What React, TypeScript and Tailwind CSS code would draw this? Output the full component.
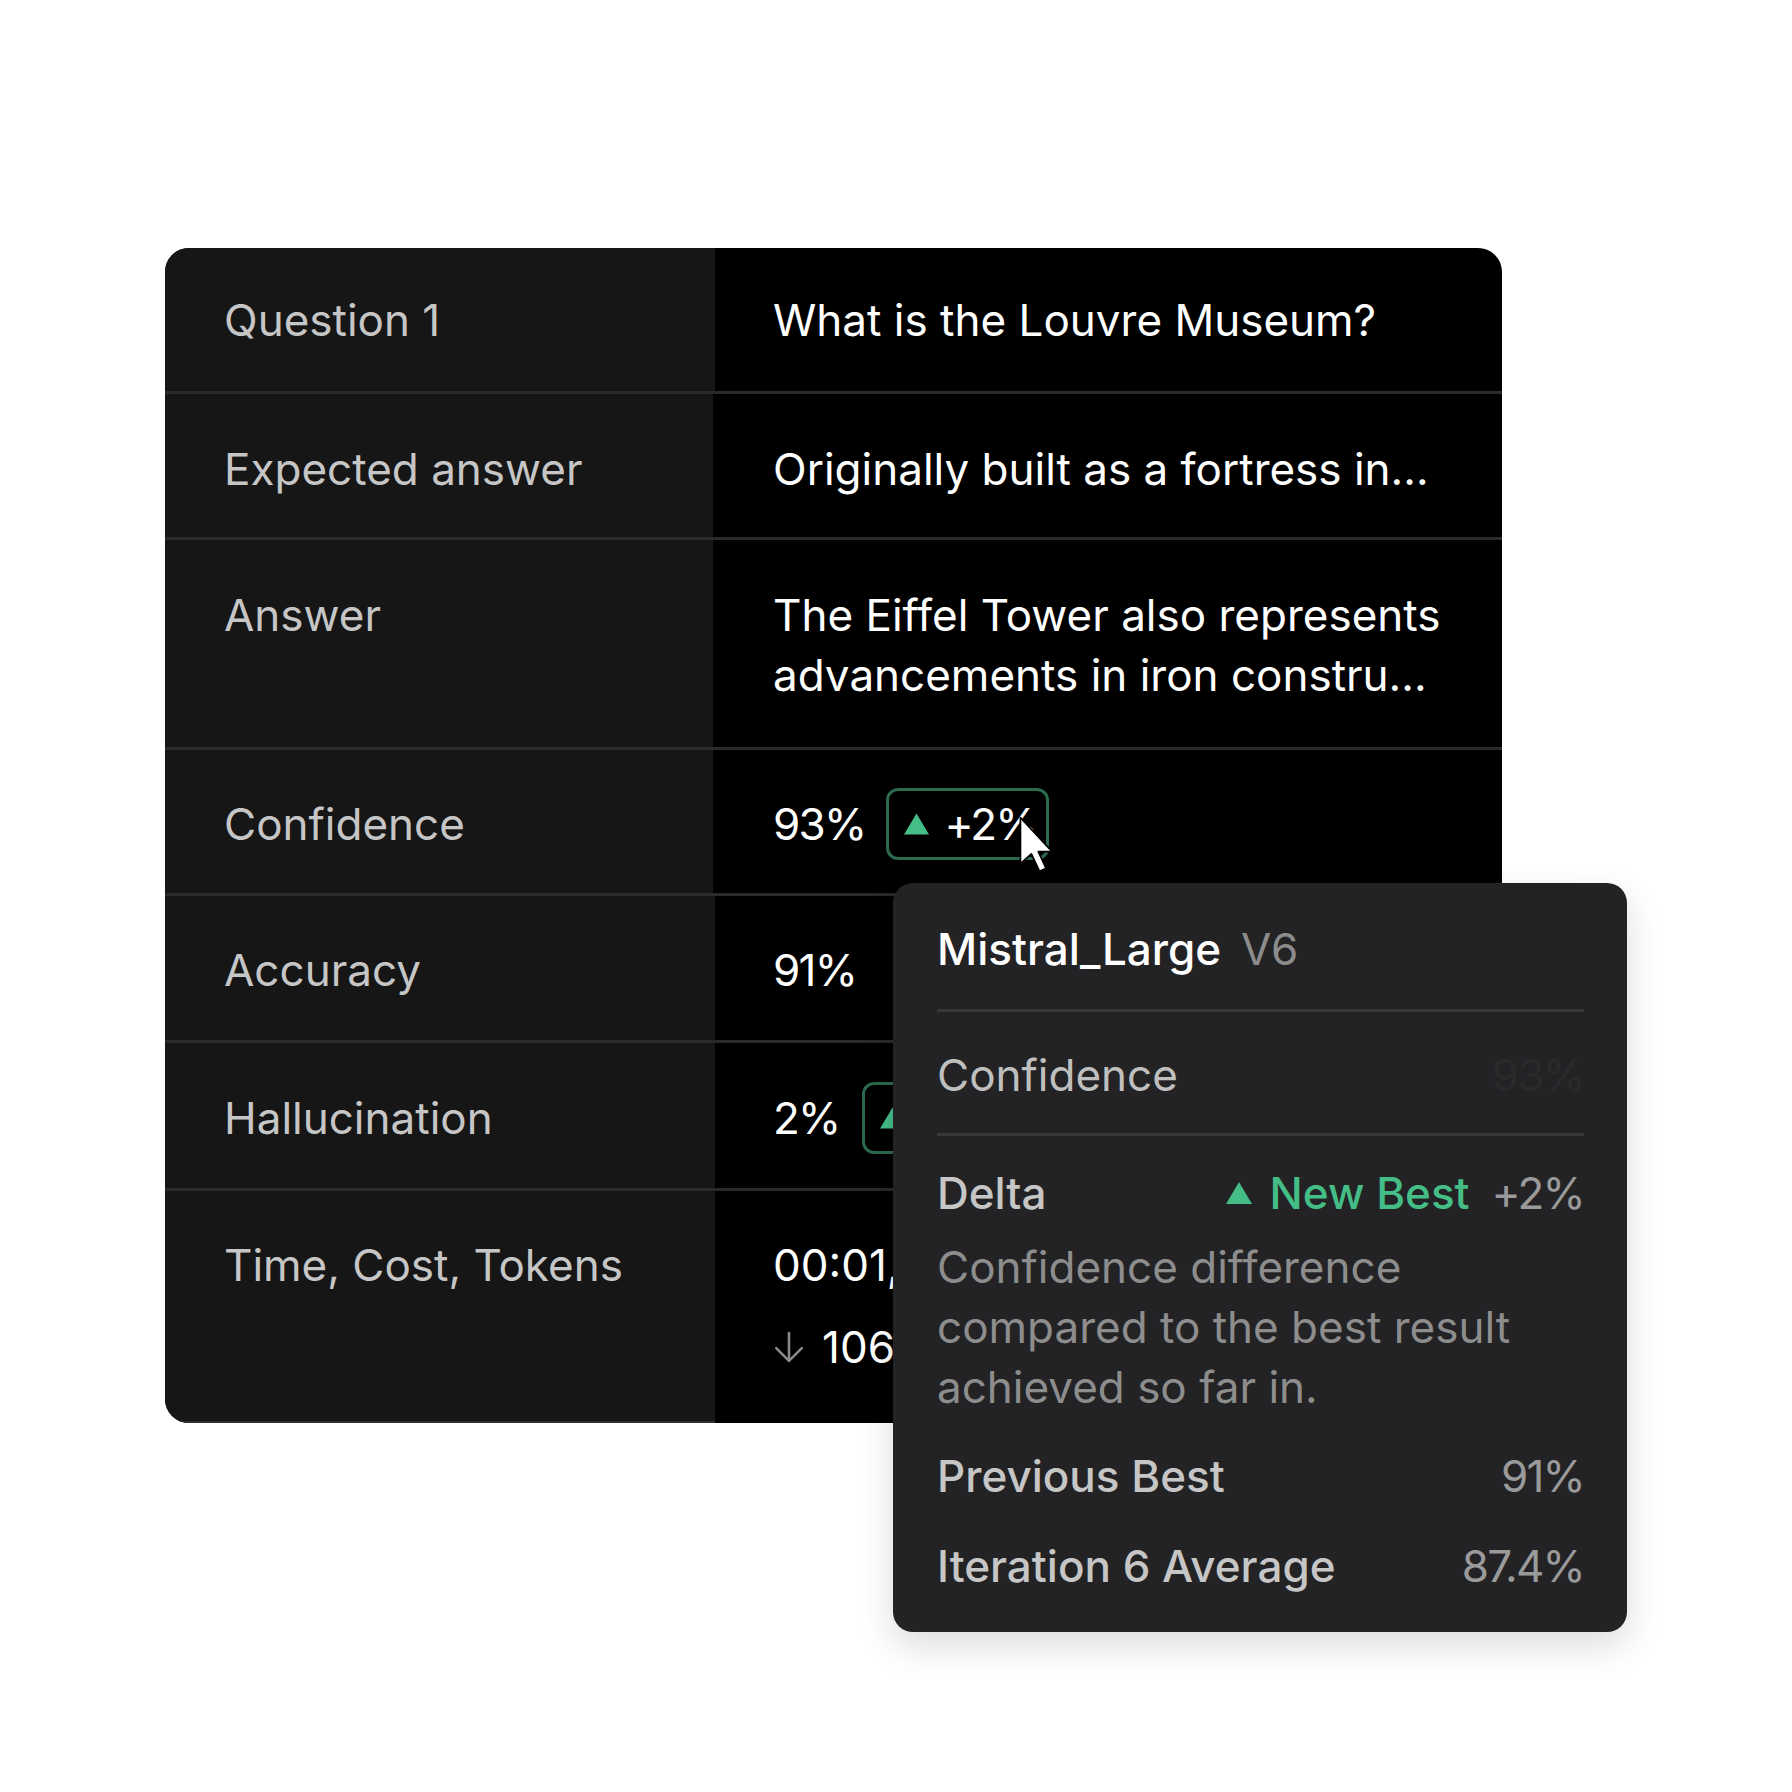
import React from "react";

function Tri({ className }: { className: string }) {
  return (
    <svg viewBox="0 0 26 22" className={className}>
      <path d="M13 0 L26 22 L0 22 Z" fill="#45bd87" />
    </svg>
  );
}

function Badge() {
  return (
    <span className="inline-flex items-center h-[72px] -my-[6px] rounded-[12px] border-[3px] border-[#2b6a4d] pl-[15px] pr-[9px] gap-[15px]">
      <Tri className="w-[25px] h-[22px]" />
      <span className="text-white tracking-[-0.04em]">+2%</span>
    </span>
  );
}

function DownArrow() {
  return (
    <svg viewBox="0 0 30 30" className="w-[32px] h-[32px]" fill="none" stroke="#8a8a8a" strokeWidth="2.4" strokeLinecap="round" strokeLinejoin="round">
      <path d="M15 2 L15 28" />
      <path d="M3 16 L15 28 L27 16" />
    </svg>
  );
}

function Cursor() {
  return (
    <svg viewBox="-0.5 -0.5 12.5 20" className="w-[36px] h-[58px]">
      <path
        d="M0 0 L0 16 L3.8 12.6 L6.6 18.6 L8.9 17.6 L6.2 11.8 L11 11.8 Z"
        fill="#ffffff"
        stroke="#000000"
        strokeWidth="0.6"
        strokeLinejoin="round"
      />
    </svg>
  );
}

export default function App() {
  return (
    <div className="w-[1792px] h-[1792px] bg-white font-['Inter',sans-serif] text-[44px] leading-[60px] pt-[248px] pl-[165px]">
      <div className="relative w-[1337px]">
        <div className="w-[1337px] h-[1175px] rounded-[24px] overflow-hidden bg-black flex flex-col">
          {/* Question 1 */}
          <div className="flex h-[146px] border-b-[3px] border-[#2a2a2a] shrink-0">
            <div className="w-[550px] bg-[#161616] pl-[59px] pt-[42px] text-[#c6c6c6]">Question 1</div>
            <div className="flex-1 pl-[58px] pt-[42px] text-white whitespace-nowrap">What is the Louvre Museum?</div>
          </div>
          {/* Expected */}
          <div className="flex h-[146px] border-b-[3px] border-[#2a2a2a] shrink-0">
            <div className="w-[548px] bg-[#161616] pl-[59px] pt-[45px] text-[#c6c6c6]">Expected answer</div>
            <div className="flex-1 pl-[60px] pt-[45px] text-white whitespace-nowrap">Originally built as a fortress in...</div>
          </div>
          {/* Answer */}
          <div className="flex h-[210px] border-b-[3px] border-[#2a2a2a] shrink-0">
            <div className="w-[548px] bg-[#161616] pl-[59px] pt-[45px] text-[#c6c6c6]">Answer</div>
            <div className="flex-1 pl-[60px] pt-[45px] text-white whitespace-nowrap">
              The Eiffel Tower also represents
              <br />
              advancements in iron constru...
            </div>
          </div>
          {/* Confidence */}
          <div className="flex h-[146px] border-b-[3px] border-[#2a2a2a] shrink-0">
            <div className="w-[548px] bg-[#161616] pl-[59px] pt-[44px] text-[#c6c6c6]">Confidence</div>
            <div className="flex-1 pl-[60px] pt-[44px] text-white">
              <div className="flex items-center h-[60px] gap-[21px]">
                <span className="tracking-[-0.04em]">93%</span>
                <Badge />
              </div>
            </div>
          </div>
          {/* Accuracy */}
          <div className="flex h-[147px] border-b-[3px] border-[#2a2a2a] shrink-0">
            <div className="w-[550px] bg-[#161616] pl-[59px] pt-[44px] text-[#c6c6c6]">Accuracy</div>
            <div className="flex-1 pl-[58px] pt-[44px] text-white">
              <span className="tracking-[-0.04em]">91%</span>
            </div>
          </div>
          {/* Hallucination */}
          <div className="flex h-[148px] border-b-[3px] border-[#2a2a2a] shrink-0">
            <div className="w-[550px] bg-[#161616] pl-[59px] pt-[45px] text-[#c6c6c6]">Hallucination</div>
            <div className="flex-1 pl-[58px] pt-[45px] text-white">
              <div className="flex items-center h-[60px] gap-[22px]">
                <span className="tracking-[-0.04em]">2%</span>
                <Badge />
              </div>
            </div>
          </div>
          {/* Time */}
          <div className="flex flex-1">
            <div className="w-[550px] bg-[#161616] pl-[59px] pt-[44px] text-[#c6c6c6] border-b-[2px] border-[#2f2f2f]">Time, Cost, Tokens</div>
            <div className="flex-1 pl-[58px] pt-[44px] text-white whitespace-nowrap flex flex-col gap-[22px]">
              <div>00:01,24 · $0.0021</div>
              <div className="flex items-center gap-[17px]">
                <DownArrow />
                <span>1068</span>
              </div>
            </div>
          </div>
        </div>

        {/* Cursor */}
        <div className="absolute left-[854px] top-[568px]">
          <Cursor />
        </div>

        {/* Popup */}
        <div className="absolute left-[728px] top-[635px] w-[734px] h-[749px] rounded-[20px] bg-[#232325] pl-[44px] pr-[43px] pt-[36px] shadow-[0_14px_36px_rgba(0,0,0,0.14)] flex flex-col">
          <div className="flex items-center gap-[20px] h-[60px] whitespace-nowrap">
            <span className="text-white font-medium">Mistral_Large</span>
            <span className="text-[#8c8c8c]">V6</span>
          </div>
          <div className="mt-[30px] h-[3px] bg-[#38383a]" />
          <div className="mt-[33px] flex justify-between h-[60px]">
            <span className="text-[#bfbfbf]">Confidence</span>
            <span className="text-[#2a2a2c] tracking-[-0.04em]">93%</span>
          </div>
          <div className="mt-[28px] h-[3px] bg-[#38383a]" />
          <div className="mt-[27px] flex justify-between items-center h-[60px] whitespace-nowrap">
            <span className="text-[#c6c6c6] font-medium">Delta</span>
            <span className="flex items-center">
              <Tri className="w-[26px] h-[22px]" />
              <span className="ml-[18px] text-[#44bd86] font-medium">New Best</span>
              <span className="ml-[22px] text-[#9a9a9a] tracking-[-0.04em]">+2%</span>
            </span>
          </div>
          <div className="mt-[14px] text-[#8d8d8d]">
            Confidence difference
            <br />
            compared to the best result
            <br />
            achieved so far in.
          </div>
          <div className="mt-[29px] flex justify-between h-[60px]">
            <span className="text-[#c6c6c6] font-medium">Previous Best</span>
            <span className="text-[#9a9a9a] tracking-[-0.04em]">91%</span>
          </div>
          <div className="mt-[30px] flex justify-between h-[60px]">
            <span className="text-[#c6c6c6] font-medium">Iteration 6 Average</span>
            <span className="text-[#9a9a9a] tracking-[-0.04em]">87.4%</span>
          </div>
        </div>
      </div>
    </div>
  );
}
